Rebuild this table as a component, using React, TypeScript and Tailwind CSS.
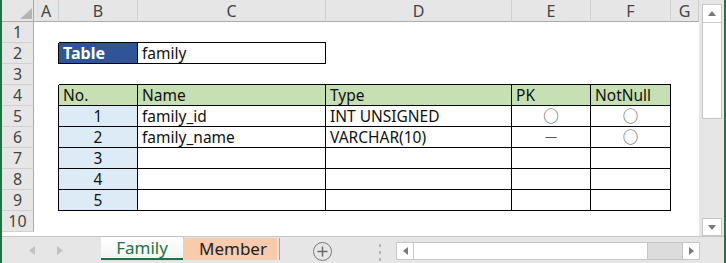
import { FC } from "react";

const font = { fontFamily: '"Noto Sans", "Noto Sans CJK JP", sans-serif' };

const colLetters = ["A", "B", "C", "D", "E", "F", "G"];

interface Field {
  no: string;
  name?: string;
  type?: string;
  pk?: string;
  nn?: string;
}

const fields: Field[] = [
  { no: "1", name: "family_id", type: "INT UNSIGNED", pk: "○", nn: "○" },
  { no: "2", name: "family_name", type: "VARCHAR(10)", pk: "－", nn: "○" },
  { no: "3" },
  { no: "4" },
  { no: "5" },
];

// which cells belong to the bordered tables (row 1-10, col 0-6 = A-G)
const isTable = (r: number, c: number) =>
  (r === 2 && (c === 1 || c === 2)) || (r >= 4 && r <= 9 && c >= 1 && c <= 5);

const cellContent = (r: number, c: number) => {
  if (r === 2 && c === 1) return { text: "Table", cls: "bg-[#2F5597] text-white font-bold text-[16px] pl-[4px]" };
  if (r === 2 && c === 2) return { text: "family", cls: "pl-[4px]" };
  if (r === 4) {
    const heads = ["", "No.", "Name", "Type", "PK", "NotNull"];
    if (c >= 1 && c <= 5) return { text: heads[c], cls: "bg-[#C6E0B4] pl-[4px]" };
  }
  if (r >= 5 && r <= 9) {
    const f = fields[r - 5];
    if (c === 1) return { text: f.no, cls: "bg-[#DDEBF7] justify-center" };
    if (c === 2) return { text: f.name ?? "", cls: "pl-[4px]" };
    if (c === 3) return { text: f.type ?? "", cls: "pl-[4px]" };
    if (c === 4) return { text: f.pk ?? "", cls: "justify-center text-[13px] text-[#555]" };
    if (c === 5) return { text: f.nn ?? "", cls: "justify-center text-[13px] text-[#555]" };
  }
  return { text: "", cls: "" };
};

const Sheet: FC = () => {
  const rows = Array.from({ length: 10 }, (_, i) => i + 1);
  return (
    <div className="grid grid-cols-[32px_25px_79px_188px_186px_79px_80px_28px] grid-rows-[22px_repeat(10,21px)] bg-white">
      <div className="relative bg-[#E6E6E6] border-r border-b border-[#ABABAB]">
        <svg className="absolute left-0 top-0" width="32" height="22">
          <polygon points="30,8 30,19 18,19" fill="#B4B4B4" />
        </svg>
      </div>
      {colLetters.map((l) => (
        <div
          key={l}
          className="flex items-center justify-center bg-[#E6E6E6] border-r border-b border-r-[#D0D0D0] border-b-[#ABABAB] text-[16px] leading-[20px] text-[#444]"
        >
          {l}
        </div>
      ))}
      {rows.map((r) => (
        <div key={r} className="contents">
          <div className="flex items-center justify-center bg-[#E6E6E6] border-r border-b border-r-[#ABABAB] border-b-[#D0D0D0] text-[16px] leading-[20px] text-[#444]">
            {r}
          </div>
          {colLetters.map((_, c) => {
            const { text, cls } = cellContent(r, c);
            const right = isTable(r, c) || isTable(r, c + 1);
            const bottom = isTable(r, c) || isTable(r + 1, c);
            return (
              <div
                key={c}
                className={[
                  "flex items-end whitespace-nowrap text-[15.5px] leading-[19px] text-[#111]",
                  right ? "border-r border-r-black" : "",
                  bottom ? "border-b border-b-black" : "",
                  cls,
                ].join(" ")}
              >
                {text}
              </div>
            );
          })}
        </div>
      ))}
    </div>
  );
};

const VScroll: FC = () => (
  <div className="w-[25px] h-[236px] bg-[#E6E6E6] flex flex-col pl-[3px] pr-[2px] pt-[4px]">
    <div className="h-[19px] bg-white border border-[#C6C6C6] flex items-center justify-center">
      <svg width="8" height="5">
        <polygon points="0,5 8,5 4,0" fill="#7A7A7A" />
      </svg>
    </div>
    <div className="h-[96px] bg-white border border-t-0 border-[#C6C6C6]" />
    <div className="flex-1" />
    <div className="h-[18px] bg-white border border-[#C6C6C6] flex items-center justify-center">
      <svg width="8" height="5">
        <polygon points="0,0 8,0 4,5" fill="#7A7A7A" />
      </svg>
    </div>
  </div>
);

const TabBar: FC = () => (
  <div className="h-[27px] bg-[#E6E6E6] border-t border-[#C6C6C6] flex items-start">
    <div className="w-[99px] h-[26px] flex items-center">
      <svg className="ml-[27px]" width="6" height="9">
        <polygon points="6,0 6,9 0,4.5" fill="#C2C2C2" />
      </svg>
      <svg className="ml-[22px]" width="6" height="9">
        <polygon points="0,0 0,9 6,4.5" fill="#C2C2C2" />
      </svg>
    </div>
    <div className="w-[82px] h-[23px] bg-gradient-to-b from-white to-[#F4F4F4] border-b-2 border-[#217346] flex items-center justify-center text-[17px] leading-[20px] text-[#217346] shadow-[1px_0_1px_rgba(0,0,0,0.15)]">
      Family
    </div>
    <div className="w-[94px] h-[22px] mt-[1px] bg-[#F8CBAD] flex items-center pl-[16px] text-[17px] leading-[20px] text-[#222]">
      Member
    </div>
    <div className="w-px h-[22px] mt-[1px] ml-[2px] bg-[#A6A6A6]" />
    <div className="ml-[33px] mt-[5px] w-[19px] h-[19px] rounded-full border-[1.5px] border-[#7A7A7A] flex items-center justify-center">
      <svg width="11" height="11">
        <path d="M5.5 0.5v10M0.5 5.5h10" stroke="#6A6A6A" strokeWidth="1.5" />
      </svg>
    </div>
    <div className="ml-[47px] mt-[7px] flex flex-col gap-[4px]">
      <div className="w-[2px] h-[3px] bg-[#B5B5B5]" />
      <div className="w-[2px] h-[3px] bg-[#B5B5B5]" />
      <div className="w-[2px] h-[3px] bg-[#B5B5B5]" />
    </div>
    <div className="ml-[15px] mt-[5px] w-[304px] h-[18px] flex border border-[#C6C6C6] bg-white">
      <div className="w-[17px] border-r border-[#C6C6C6] flex items-center justify-center">
        <svg width="5" height="8">
          <polygon points="5,0 5,8 0,4" fill="#7A7A7A" />
        </svg>
      </div>
      <div className="w-[234px] border-r border-[#C6C6C6]" />
      <div className="flex-1 bg-[#DCDCDC]" />
      <div className="w-[17px] border-l border-[#C6C6C6] flex items-center justify-center">
        <svg width="5" height="8">
          <polygon points="0,0 0,8 5,4" fill="#7A7A7A" />
        </svg>
      </div>
    </div>
  </div>
);

const App: FC = () => (
  <div
    style={font}
    className="w-[726px] h-[263px] overflow-hidden border-x-2 border-[#217346] bg-white flex flex-col"
  >
    <div className="flex h-[236px]">
      <div className="w-[697px] h-[236px] bg-white">
        <Sheet />
      </div>
      <VScroll />
    </div>
    <TabBar />
  </div>
);

export default App;
